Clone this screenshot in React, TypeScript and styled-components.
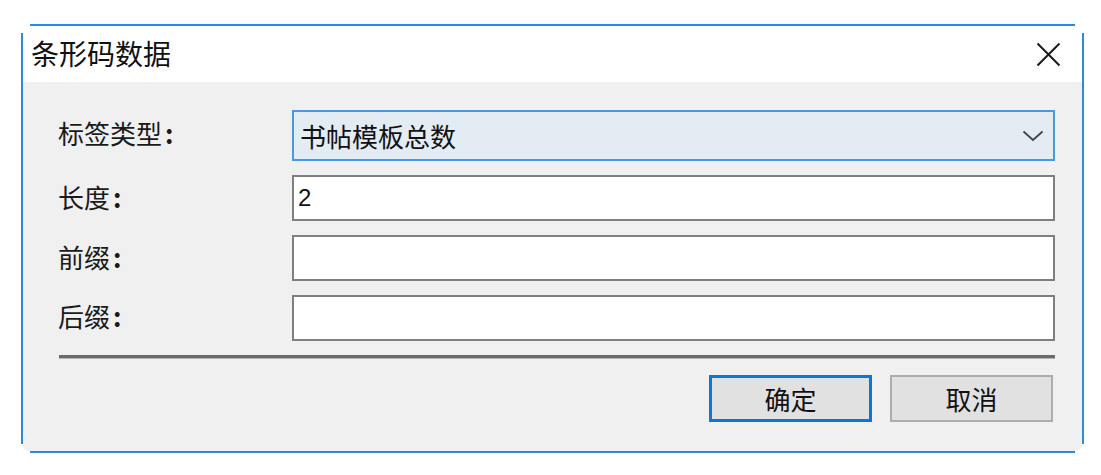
import styled, { createGlobalStyle } from 'styled-components'

const GlobalStyle = createGlobalStyle`
  html, body {
    margin: 0;
    padding: 0;
    background: #ffffff;
  }
  body {
    font-family: "Noto Sans CJK SC", "Noto Sans", sans-serif;
    color: #000;
  }
`

const Page = styled.div`
  padding: 24px 0 0 21px;
`

const Frame = styled.div`
  position: relative;
  width: 1063px;
  height: 429px;
  padding: 2px;
  box-sizing: border-box;
  display: flex;
  flex-direction: column;

  /* window border: four separate blue strokes with open corners */
  &::before {
    content: '';
    position: absolute;
    top: 0;
    bottom: 0;
    left: 9px;
    right: 9px;
    border-top: 2px solid #2b8be0;
    border-bottom: 2px solid #2b8be0;
    pointer-events: none;
  }
  &::after {
    content: '';
    position: absolute;
    top: 9px;
    bottom: 9px;
    left: 0;
    right: 0;
    border-left: 2px solid #2b8be0;
    border-right: 2px solid #2b8be0;
    pointer-events: none;
  }
`

const TitleBar = styled.div`
  height: 56px;
  flex-shrink: 0;
  background: #ffffff;
  display: flex;
  align-items: center;
  justify-content: space-between;
  padding-left: 8px;
  padding-right: 11px;
`

const Title = styled.div`
  font-size: 28px;
  line-height: 30px;
  color: #111;
  margin-top: -2px;
`

const CloseButton = styled.button`
  width: 46px;
  height: 56px;
  border: 0;
  padding: 0;
  background: transparent;
  display: flex;
  align-items: center;
  justify-content: center;
  color: #1a1a1a;
`

const Body = styled.div`
  flex: 1;
  background: #f0f0f0;
  padding: 28px 27px 0 35px;
  border-bottom-left-radius: 6px;
  border-bottom-right-radius: 6px;
`

const Form = styled.div`
  display: grid;
  grid-template-columns: 234px 1fr;
  row-gap: 14px;
  align-items: center;
`

const Label = styled.div<{ $shift?: number }>`
  font-size: 26px;
  line-height: 30px;
  color: #1a1a1a;
  margin-top: ${(p) => p.$shift ?? 0}px;
`

const Colon = styled.span`
  font-weight: 700;
  margin-left: 3px;
`

const Combo = styled.div`
  height: 51px;
  box-sizing: border-box;
  border: 2px solid #4a98e2;
  background: #e3ebf3;
  display: flex;
  align-items: center;
  justify-content: space-between;
  padding: 0 9px 0 6px;
  font-size: 26px;
  color: #111;
`

const Field = styled.div`
  height: 46px;
  box-sizing: border-box;
  border: 2px solid #7f7f7f;
  background: #ffffff;
  display: flex;
  align-items: center;
  padding-left: 4px;
  font-family: "Liberation Sans", "Noto Sans", sans-serif;
  font-size: 24px;
  color: #111;
`

const Separator = styled.div`
  margin: 14px 0 0 1px;
  height: 3px;
  background: #6a6a6a;
  border-bottom: 1px solid #b4b4b4;
`

const Actions = styled.div`
  display: flex;
  justify-content: flex-end;
  gap: 18px;
  margin-top: 16px;
  padding-right: 2px;
`

const Button = styled.button<{ $primary?: boolean }>`
  width: 163px;
  height: 47px;
  box-sizing: border-box;
  background: #e1e1e1;
  border: ${(p) => (p.$primary ? '3px solid #0a78d7' : '2px solid #adadad')};
  font-family: "Noto Sans CJK SC", sans-serif;
  font-size: 26px;
  color: #111;
  padding: 0;
  line-height: 1;
`

const App = () => {
  return (
    <Page>
      <GlobalStyle />
      <Frame>
        <TitleBar>
          <Title>条形码数据</Title>
          <CloseButton>
            <svg width="25" height="25" viewBox="0 0 25 25">
              <path d="M1.5 1.5 L23.5 23.5 M23.5 1.5 L1.5 23.5" stroke="currentColor" strokeWidth="2" fill="none" />
            </svg>
          </CloseButton>
        </TitleBar>
        <Body>
          <Form>
            <Label $shift={-6}>标签类型<Colon>:</Colon></Label>
            <Combo>
              <span>书帖模板总数</span>
              <svg width="22" height="12" viewBox="0 0 22 12">
                <path d="M1.5 1.5 L11 10 L20.5 1.5" stroke="#444" strokeWidth="1.8" fill="none" />
              </svg>
            </Combo>
            <Label $shift={-2}>长度<Colon>:</Colon></Label>
            <Field>2</Field>
            <Label $shift={-2}>前缀<Colon>:</Colon></Label>
            <Field />
            <Label $shift={-4}>后缀<Colon>:</Colon></Label>
            <Field />
          </Form>
          <Separator />
          <Actions>
            <Button $primary>确定</Button>
            <Button>取消</Button>
          </Actions>
        </Body>
      </Frame>
    </Page>
  )
}

export default App
